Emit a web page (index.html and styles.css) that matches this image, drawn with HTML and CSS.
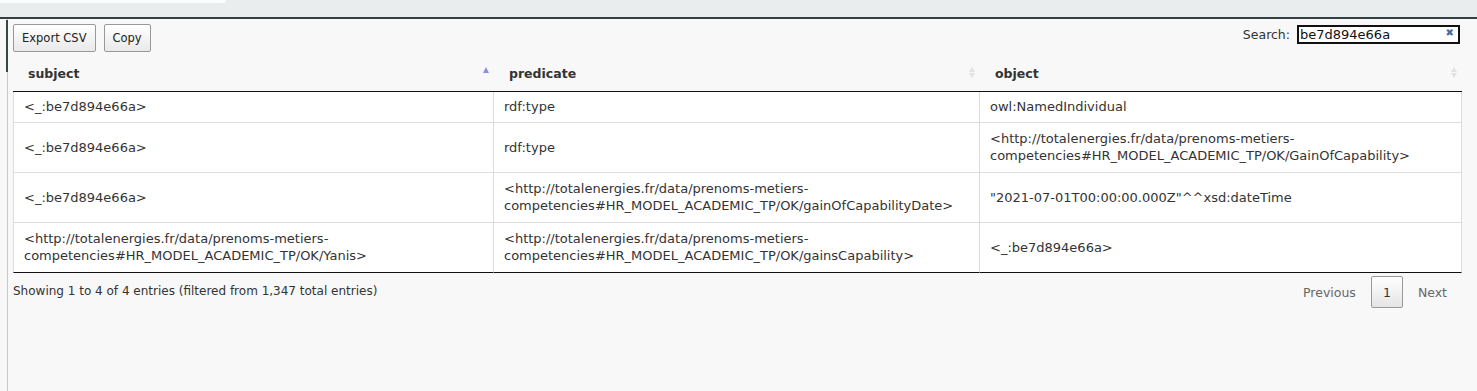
FILE: index.html
```html
<!DOCTYPE html>
<html lang="en">
<head>
    <meta charset="UTF-8">
    <title>Triples</title>
    <link rel="stylesheet" href="styles.css">
</head>
<body>
    <div class="topbar">
        <div class="tab"></div>
    </div>
    <div class="main">
        <div class="rail"></div>
        <div class="wrapper">
            <div class="toolbar">
                <div class="buttons">
                    <button class="btn">Export CSV</button>
                    <button class="btn">Copy</button>
                </div>
                <label class="search">Search:
                    <span class="search-box">
                        <input type="text" value="be7d894e66a">
                        <span class="clear">&#x2716;</span>
                    </span>
                </label>
            </div>
            <table class="triples">
                <colgroup>
                    <col class="c1"><col class="c2"><col class="c3">
                </colgroup>
                <thead>
                    <tr>
                        <th class="sorting-asc">subject</th>
                        <th class="sorting">predicate</th>
                        <th class="sorting">object</th>
                    </tr>
                </thead>
                <tbody>
                    <tr class="short">
                        <td>&lt;_:be7d894e66a&gt;</td>
                        <td>rdf:type</td>
                        <td>owl:NamedIndividual</td>
                    </tr>
                    <tr>
                        <td>&lt;_:be7d894e66a&gt;</td>
                        <td>rdf:type</td>
                        <td>&lt;http://totalenergies.fr/data/prenoms-metiers-<br>competencies#HR_MODEL_ACADEMIC_TP/OK/GainOfCapability&gt;</td>
                    </tr>
                    <tr>
                        <td>&lt;_:be7d894e66a&gt;</td>
                        <td>&lt;http://totalenergies.fr/data/prenoms-metiers-<br>competencies#HR_MODEL_ACADEMIC_TP/OK/gainOfCapabilityDate&gt;</td>
                        <td>"2021-07-01T00:00:00.000Z"^^xsd:dateTime</td>
                    </tr>
                    <tr>
                        <td>&lt;http://totalenergies.fr/data/prenoms-metiers-<br>competencies#HR_MODEL_ACADEMIC_TP/OK/Yanis&gt;</td>
                        <td>&lt;http://totalenergies.fr/data/prenoms-metiers-<br>competencies#HR_MODEL_ACADEMIC_TP/OK/gainsCapability&gt;</td>
                        <td>&lt;_:be7d894e66a&gt;</td>
                    </tr>
                </tbody>
            </table>
            <div class="footer">
                <div class="info">Showing 1 to 4 of 4 entries (filtered from 1,347 total entries)</div>
                <div class="paginate">
                    <span class="page-link disabled">Previous</span>
                    <span class="page-link current">1</span>
                    <span class="page-link disabled">Next</span>
                </div>
            </div>
        </div>
    </div>
</body>
</html>
```

FILE: styles.css
```css
html, body {
    margin: 0;
    padding: 0;
    height: 100%;
}
body {
    font-family: 'DejaVu Sans', Verdana, sans-serif;
    font-size: 12px;
    color: #333;
    background-color: #f8f8f8;
    overflow: hidden;
}
.topbar {
    height: 17px;
    background-color: #e9eded;
    border-bottom: 2px solid #34403f;
}
.tab {
    width: 226px;
    height: 3px;
    background-color: #fbfcfc;
    border-bottom-right-radius: 8px;
}
.main {
    display: flex;
    height: calc(100% - 19px);
}
.rail {
    position: relative;
    width: 7px;
    border-right: 1px solid #c9c9c9;
    flex: none;
}
.rail::after {
    content: '';
    position: absolute;
    right: -1px;
    top: 1px;
    width: 2px;
    height: 52px;
    background-color: #3b4747;
}
.wrapper {
    flex: 1;
    padding: 5px 15px 0 5px;
}
.toolbar {
    display: flex;
    justify-content: space-between;
    align-items: flex-start;
    height: 31px;
}
.buttons {
    display: flex;
    gap: 8px;
}
.btn {
    font-family: inherit;
    font-size: 11.5px;
    color: #222;
    height: 28px;
    padding: 0 8px;
    white-space: nowrap;
    border: 1px solid #999;
    border-radius: 2px;
    background: linear-gradient(to bottom, #ffffff 0%, #e9e9e9 100%);
    cursor: pointer;
}
.search {
    display: flex;
    align-items: center;
    gap: 7px;
    margin-top: 1px;
    font-size: 12.5px;
}
.search-box {
    position: relative;
    display: inline-block;
    margin-right: 2px;
}
.search-box input {
    box-sizing: border-box;
    width: 163px;
    height: 19px;
    border: 2px solid #111;
    padding: 0 16px 0 1px;
    font-family: inherit;
    font-size: 13px;
    color: #111;
    background: #fff;
    outline: none;
}
.clear {
    position: absolute;
    right: 6px;
    top: 2px;
    font-size: 10px;
    color: #4a6aa5;
}
.triples {
    width: 1449px;
    border-collapse: separate;
    border-spacing: 0;
    table-layout: fixed;
    font-size: 13px;
}
.c1 { width: 481px; }
.c2 { width: 486px; }
.c3 { width: 482px; }
.triples th {
    position: relative;
    height: 35px;
    padding: 1px 18px 0 15px;
    text-align: left;
    font-weight: bold;
    font-size: 12.5px;
    border-bottom: 1px solid #111;
}
.triples th.sorting-asc::after {
    content: '';
    position: absolute;
    right: 5px;
    top: 12px;
    border-left: 3.5px solid transparent;
    border-right: 3.5px solid transparent;
    border-bottom: 6px solid #8a8fe0;
}
.triples th.sorting::before,
.triples th.sorting::after {
    content: '';
    position: absolute;
    right: 5px;
    border-left: 3.5px solid transparent;
    border-right: 3.5px solid transparent;
}
.triples th.sorting::before {
    top: 12px;
    border-bottom: 5px solid #e2e2e2;
}
.triples th.sorting::after {
    top: 18px;
    border-top: 5px solid #e2e2e2;
}
.triples td {
    background-color: #fff;
    padding: 7px 10px 8px;
    line-height: 17px;
    vertical-align: middle;
    border-top: 1px solid #ddd;
    border-right: 1px solid #ddd;
}
.triples td:first-child {
    border-left: 1px solid #ddd;
}
.triples tr:first-child td {
    border-top: none;
}
.triples tr.short td {
    padding: 6px 10px 7px;
}
.triples tr:last-child td {
    border-bottom: 1px solid #111;
}
.footer {
    display: flex;
    justify-content: space-between;
    align-items: flex-start;
    padding-top: 3px;
}
.info {
    padding-top: 8px;
    font-size: 12px;
}
.paginate {
    display: flex;
    align-items: center;
}
.page-link {
    display: inline-block;
    padding: 7px 15px;
    font-size: 12.5px;
    color: #666;
}
.page-link.current {
    box-sizing: border-box;
    width: 32px;
    height: 32px;
    padding: 8px 0 0;
    text-align: center;
    color: #333;
    border: 1px solid #999;
    border-radius: 2px;
    background: linear-gradient(to bottom, #fff 0%, #e4e4e4 100%);
}
```
